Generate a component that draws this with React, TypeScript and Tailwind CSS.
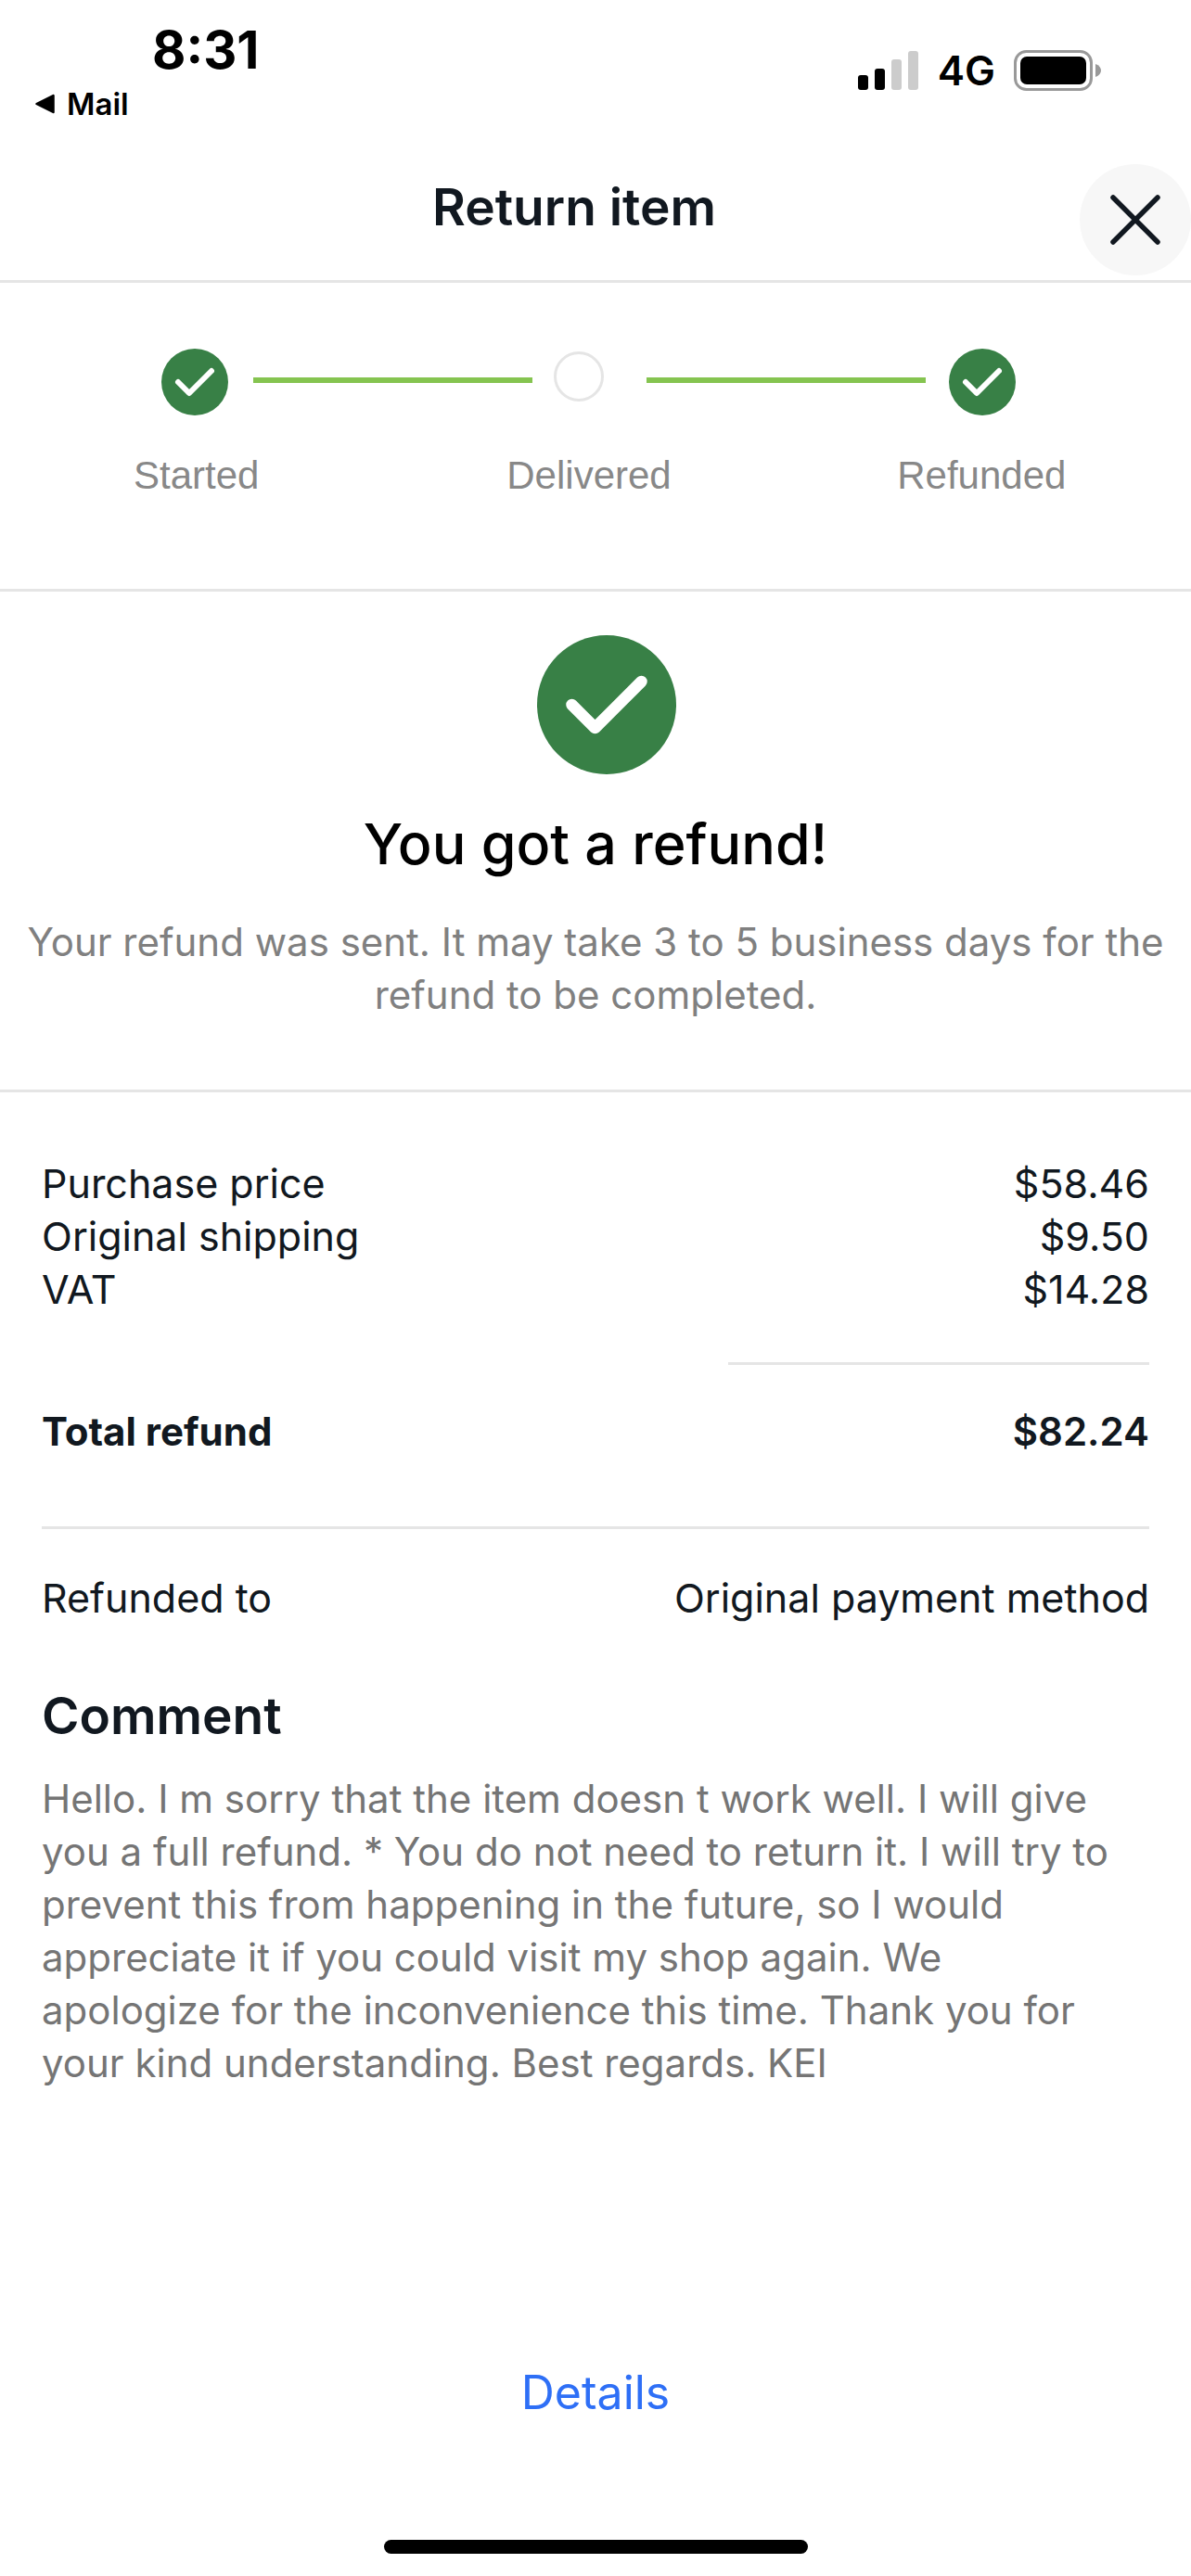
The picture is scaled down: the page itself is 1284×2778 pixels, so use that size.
const charges = [
    { label: "Purchase price", amount: "$58.46" },
    { label: "Original shipping", amount: "$9.50" },
    { label: "VAT", amount: "$14.28" },
];

const steps = ["Started", "Delivered", "Refunded"];

const CheckCircle = ({ className }: { className: string }) => (
    <svg className={className} viewBox="0 0 24 24" fill="none" aria-hidden="true">
        <circle cx="12" cy="12" r="12" fill="#388046" />
        <path d="M6 12l4 4 8-8" stroke="#fff" strokeWidth="2" strokeLinecap="round" strokeLinejoin="round" />
    </svg>
);

const StatusBar = () => {
    return (
        <div className="flex justify-between pt-6 pr-24 pl-9 text-black">
            <div className="flex flex-col">
                <div className="pl-32 text-[56px] leading-[60px] font-bold">8:31</div>
                <a href="#mail" className="flex items-center gap-3 text-[33px] leading-[56px] font-semibold">
                    <svg className="w-6 h-6" viewBox="0 0 24 24" aria-hidden="true">
                        <path d="M3.5 12L21.5 3v18z" fill="#000" stroke="#000" strokeWidth="2.5" strokeLinejoin="round" />
                    </svg>
                    Mail
                </a>
            </div>
            <div className="flex items-center self-start gap-5 pt-6 text-[44px] leading-[56px] font-semibold">
                <svg className="w-[66px] h-[42px]" viewBox="0 0 66 42" aria-label="Signal">
                    <rect x="0" y="26" width="11" height="16" rx="3" />
                    <rect x="18" y="19" width="11" height="23" rx="3" />
                    <rect x="36" y="9" width="11" height="33" rx="3" fill="#ccc" />
                    <rect x="54" y="0" width="11" height="42" rx="3" fill="#ccc" />
                </svg>
                4G
                <svg className="w-[95px] h-[44px]" viewBox="0 0 95 44" fill="none" aria-label="Battery">
                    <rect x="1.5" y="1.5" width="82" height="41" rx="12" stroke="#999" strokeWidth="3" />
                    <rect x="7" y="7" width="71" height="30" rx="7" fill="#000" />
                    <path d="M88 15c8 3 8 11 0 14z" fill="#999" />
                </svg>
            </div>
        </div>
    );
};

const Header = () => {
    return (
        <div className="flex items-center pt-[37px] pb-[5px] pl-[74px] border-b-3 border-[#e5e5e5]">
            <h1 className="flex-1 pb-7 text-[55px] leading-[64px] font-semibold text-center">Return item</h1>
            <button
                type="button"
                aria-label="Close"
                className="flex justify-center items-center w-[120px] h-[120px] bg-[#f7f7f7] rounded-full"
            >
                <svg className="w-[54px] h-[54px]" viewBox="0 0 54 54" fill="none" aria-hidden="true">
                    <path d="M3 3l48 48M51 3L3 51" stroke="#111820" strokeWidth="5.5" strokeLinecap="round" />
                </svg>
            </button>
        </div>
    );
};

const Progress = () => {
    return (
        <div className="pt-[71px] pb-[97px] border-b-3 border-[#e5e5e5]">
            <div className="flex items-start pr-[189px] pl-[174px]">
                <CheckCircle className="w-[72px] h-[72px]" />
                <div className="flex-1 mt-[31px] mr-[23px] ml-[27px] h-[6px] bg-[#85c450]" />
                <div className="mt-[3px] w-[54px] h-[54px] rounded-full border-3 border-[#e5e5e5]" />
                <div className="flex-1 mt-[31px] mr-[25px] ml-[46px] h-[6px] bg-[#85c450]" />
                <CheckCircle className="w-[72px] h-[72px]" />
            </div>
            <ol className="grid grid-cols-3 pt-[39px] pr-[14px] font-['Liberation_Sans',sans-serif] text-[42px] leading-[51px] text-center text-[#888]">
                {steps.map((step) => (
                    <li key={step}>{step}</li>
                ))}
            </ol>
        </div>
    );
};

const Result = () => {
    return (
        <div className="flex flex-col items-center px-4 pt-[47px] pb-[74px] text-center border-b-3 border-[#e5e5e5]">
            <CheckCircle className="ml-6 w-[150px] h-[150px]" />
            <h2 className="pt-[37px] text-[61px] leading-[76px] font-medium text-black">You got a refund!</h2>
            <p className="pt-[39px] text-[42px] leading-[57px] text-[#808080]">
                Your refund was sent. It may take 3 to 5 business days for the refund to be completed.
            </p>
        </div>
    );
};

const Summary = () => {
    return (
        <div className="px-[45px] pt-[70px] text-[43px] leading-[57px]">
            <table className="w-full">
                <tbody>
                    {charges.map((charge) => (
                        <tr key={charge.label}>
                            <th scope="row" className="font-normal text-left">
                                {charge.label}
                            </th>
                            <td className="text-right">{charge.amount}</td>
                        </tr>
                    ))}
                </tbody>
                <tfoot>
                    <tr>
                        <td colSpan={2} className="pt-[50px] pb-[43px]">
                            <div className="ml-auto w-[38%] h-[3px] bg-[#e5e5e5]" />
                        </td>
                    </tr>
                    <tr className="text-[42px] font-semibold">
                        <th scope="row" className="text-left">
                            Total refund
                        </th>
                        <td className="text-right">$82.24</td>
                    </tr>
                </tfoot>
            </table>
            <div className="flex justify-between pt-[46px] mt-[74px] border-t-3 border-[#e5e5e5]">
                <span>Refunded to</span>
                <span>Original payment method</span>
            </div>
            <h2 className="pt-[66px] text-[55px] leading-[64px] font-semibold">Comment</h2>
            <p className="pt-[29px] pr-8 text-[42px] text-[#757575]">
                Hello. I m sorry that the item doesn t work well. I will give you a full refund. * You do not need to
                return it. I will try to prevent this from happening in the future, so I would appreciate it if you could
                visit my shop again. We apologize for the inconvenience this time. Thank you for your kind understanding.
                Best regards. KEI
            </p>
        </div>
    );
};

const App = () => {
    return (
        <div className="flex flex-col min-h-screen font-['Inter',sans-serif] text-[#111820] bg-white">
            <StatusBar />
            <Header />
            <Progress />
            <Result />
            <Summary />
            <div className="flex flex-col items-center pt-20 pb-6 mt-auto">
                <button type="button" className="text-[50px] leading-[60px] text-[#2e6ff6]">
                    Details
                </button>
                <div className="mt-[129px] w-[457px] h-[15px] bg-black rounded-full" />
            </div>
        </div>
    );
};

export default App;
